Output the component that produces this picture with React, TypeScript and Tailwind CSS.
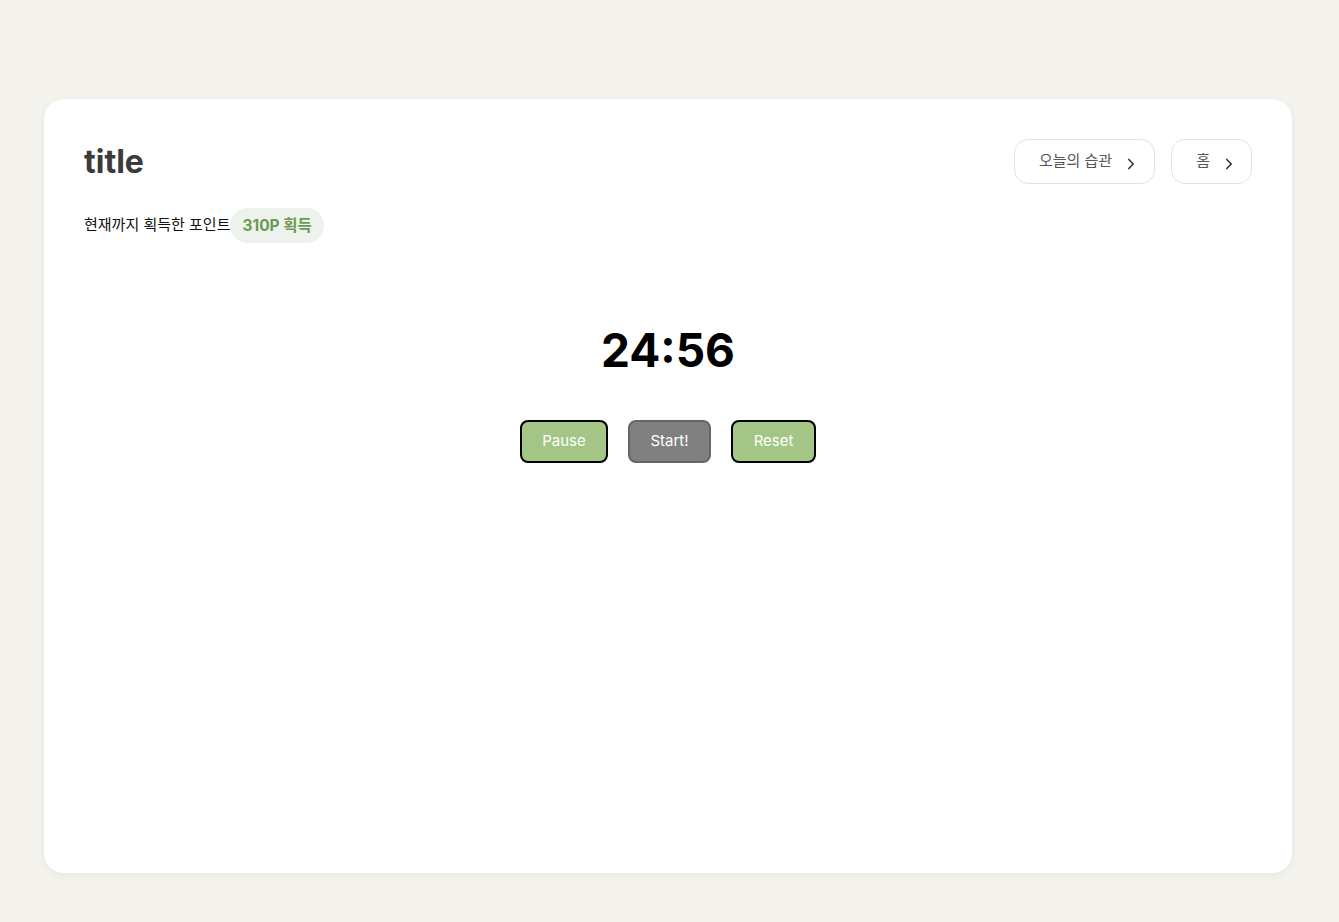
import { ChevronRight } from "lucide-react";

const font = { fontFamily: 'Inter, "Noto Sans CJK KR", sans-serif' };

export default function App() {
  return (
    <div className="min-h-[922px] bg-[#f4f3ee] pl-[44px] pt-[99px]" style={font}>
      <div className="h-[774px] w-[1248px] rounded-[20px] bg-white px-10 pt-10 shadow-[0_2px_10px_rgba(0,0,0,0.06)]">
        <div className="flex items-center justify-between">
          <h1 className="text-[32px] font-bold leading-none text-[#3b3b3b]">title</h1>
          <div className="flex gap-4">
            <button className="flex h-[45px] items-center gap-[10px] rounded-[14px] border border-[#e2e2e2] pl-6 pr-[14px] text-[15px] text-[#555]">
              오늘의 습관
              <ChevronRight size={18} strokeWidth={2.2} className="mt-1 text-[#333]" />
            </button>
            <button className="flex h-[45px] items-center gap-[10px] rounded-[14px] border border-[#e2e2e2] pl-6 pr-[13px] text-[15px] text-[#555]">
              홈
              <ChevronRight size={18} strokeWidth={2.2} className="mt-1 text-[#333]" />
            </button>
          </div>
        </div>
        <div className="mt-6 flex items-center text-[15px] text-[#111]">
          <span>현재까지 획득한 포인트</span>
          <span className="flex h-[35px] items-center rounded-full bg-[#eef2ec] px-3 text-[15.5px] font-bold text-[#6b9a55]">
            310P 획득
          </span>
        </div>
        <div className="mt-[84px] text-center text-[46px] font-bold leading-none text-black">24:56</div>
        <div className="mt-[47px] flex justify-center gap-5">
          <button className="h-[43px] w-[88px] rounded-lg border-2 border-black bg-[#a3c585] text-[15px] text-white">
            Pause
          </button>
          <button className="h-[43px] w-[83px] rounded-lg border-2 border-[#666] bg-[#808080] text-[15px] text-white">
            Start!
          </button>
          <button className="h-[43px] w-[85px] rounded-lg border-2 border-black bg-[#a3c585] text-[15px] text-white">
            Reset
          </button>
        </div>
      </div>
    </div>
  );
}
